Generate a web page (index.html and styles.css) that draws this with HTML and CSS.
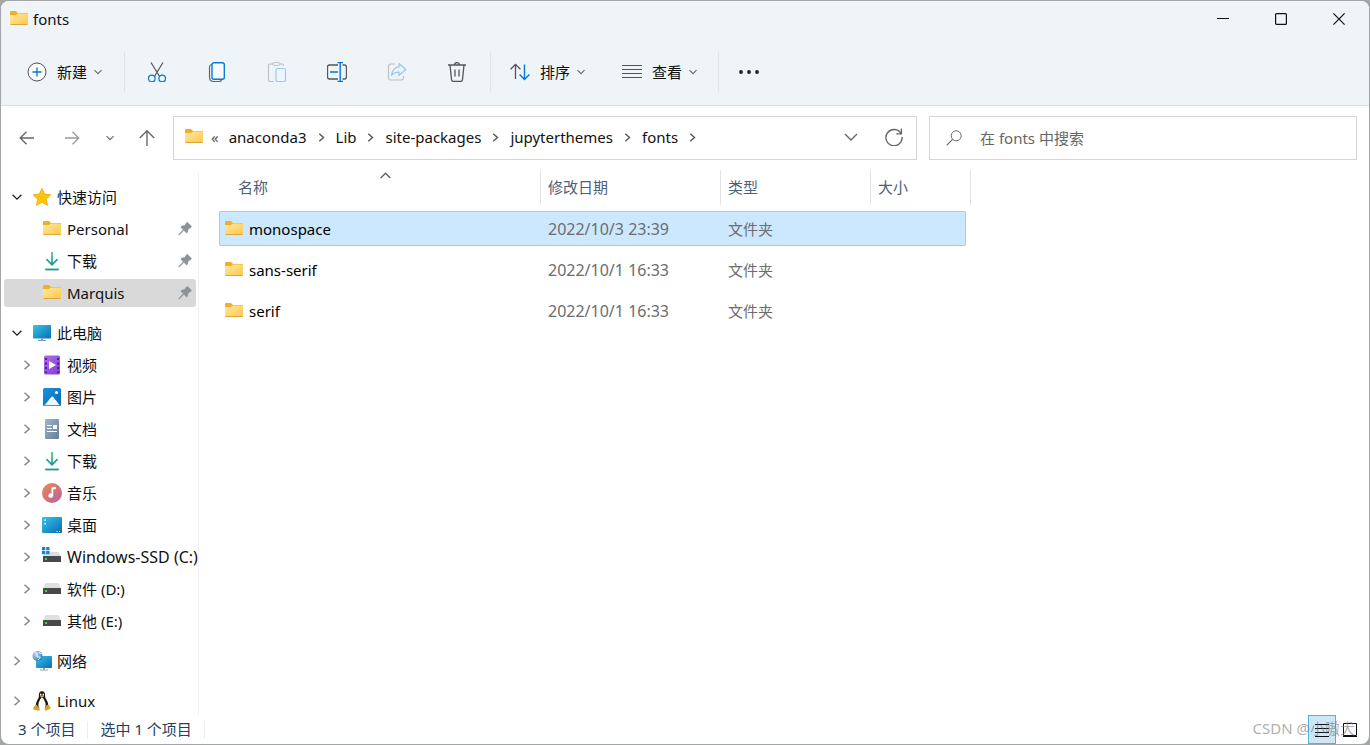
FILE: index.html
```html
<!DOCTYPE html>
<html lang="zh-CN">
<head>
<meta charset="utf-8">
<title>fonts</title>
<link rel="stylesheet" href="styles.css">
</head>
<body>
<svg class="sprite" aria-hidden="true">
  <defs>
    <linearGradient id="g-folder" x1="0" y1="0" x2="1" y2="1"><stop offset="0" stop-color="#ffe8a0"/><stop offset="1" stop-color="#fdc84a"/></linearGradient>
    <linearGradient id="g-screen" x1="0" y1="0" x2="1" y2="1"><stop offset="0" stop-color="#35c6e8"/><stop offset="1" stop-color="#0b6bb4"/></linearGradient>
    <linearGradient id="g-video" x1="0" y1="0" x2="1" y2="1"><stop offset="0" stop-color="#b06be8"/><stop offset="1" stop-color="#7f3fd6"/></linearGradient>
    <linearGradient id="g-doc" x1="0" y1="0" x2="1" y2="1"><stop offset="0" stop-color="#a3b5c8"/><stop offset="1" stop-color="#647d98"/></linearGradient>
    <linearGradient id="g-music" x1="0" y1="0" x2="1" y2="1"><stop offset="0" stop-color="#f08a4c"/><stop offset="1" stop-color="#b061a8"/></linearGradient>
    <linearGradient id="g-pic" x1="0" y1="0" x2="1" y2="1"><stop offset="0" stop-color="#1894dc"/><stop offset="1" stop-color="#0868b4"/></linearGradient>
    <linearGradient id="g-down" x1="0" y1="0" x2="0" y2="1" ><stop offset="0" stop-color="#35c08e"/><stop offset="1" stop-color="#12938f"/></linearGradient>
    <radialGradient id="g-globe" cx=".35" cy=".3" r=".8"><stop offset="0" stop-color="#b9e2f5"/><stop offset="1" stop-color="#2874a8"/></radialGradient>
  </defs>
  <symbol id="folder" viewBox="0 0 20 20"><path d="M1 3q0-1 1-1h5l2 2h9q1 0 1 1v5H1z" fill="#eeb02a"/><path d="M1 6h6l2-1.500h9q1 0 1 1V15q0 1-1 1H2q-1 0-1-1z" fill="url(#g-folder)"/><path d="M1.500 15.500h17" stroke="#dda63a"/></symbol>
  <symbol id="star" viewBox="0 0 20 20"><path d="M10 1.500l2.700 5.600 6.100.8-4.500 4.200 1.200 6.200L10 15.300l-5.500 3 1.200-6.200L1.200 7.900l6.100-.8z" fill="#fcc40c" stroke="#f3b70b" stroke-linejoin="round"/></symbol>
  <symbol id="download" viewBox="0 0 20 20"><path d="M9.200 1h1.600v10.800l4.200-4.200 1.200 1.200-6.200 6.200-6.200-6.200L5 7.600l4.200 4.200z" fill="url(#g-down)"/><path d="M3.200 17.600h13.600v1.800H3.200z" fill="#159a8d"/></symbol>
  <symbol id="pc" viewBox="0 0 20 20"><rect x="1" y="2" width="18" height="13.500" rx="1" fill="url(#g-screen)"/><path d="M9 15.500h2V17h3v1H6v-1h3z" fill="#8298a5"/></symbol>
  <symbol id="video" viewBox="0 0 20 20"><rect x="2" y="0.500" width="16" height="19" rx="1.500" fill="url(#g-video)"/><path d="M4 3v15M16 3v15" stroke="#36136c" stroke-width="1.600" stroke-dasharray="2 2.500"/><path d="M7 6l7 4-7 4z" fill="#fff"/></symbol>
  <symbol id="picture" viewBox="0 0 20 20"><rect x="1" y="1" width="18" height="18" rx="1.500" fill="url(#g-pic)"/><path d="M2.500 18.300l7-8.500q.8-.8 1.600 0l6.700 8.500z" fill="#edf8ff"/><circle cx="14.500" cy="5.500" r="1.600" fill="#fff"/></symbol>
  <symbol id="document" viewBox="0 0 20 20"><rect x="3" y="0" width="14" height="20" rx="1" fill="url(#g-doc)"/><path d="M5 6.500h5M5 9.500h5M5 12.500h10M11 9.500h4" stroke="#fff" stroke-width="1.200"/><path d="M11 6h4v3h-4z" fill="#fff"/></symbol>
  <symbol id="music" viewBox="0 0 20 20"><circle cx="10" cy="10" r="10" fill="url(#g-music)"/><path d="M9.500 4.500l4.500-.8v2.400l-2.800.5v6a2.400 2.200 0 1 1-1.700-2.100z" fill="#fff"/></symbol>
  <symbol id="desktop" viewBox="0 0 20 20"><rect x="0" y="2" width="20" height="16" rx="1" fill="url(#g-screen)"/><path d="M2.500 4.500h1.500v1.500H2.500zM2.500 8h1.500v1.500H2.500z" fill="#fff"/><path d="M14.500 16.500h1M17 16.500h1" stroke="#fff"/></symbol>
  <symbol id="drive" viewBox="0 0 20 20"><path d="M4.500 4h11q1 0 1.500 1l2 4.500H1L3 5q.500-1 1.500-1z" fill="#dedfe0"/><rect x="1" y="9" width="18" height="6" rx=".5" fill="#48494a"/><rect x="3" y="11" width="2" height="2" fill="#2fdc4b"/></symbol>
  <symbol id="windrive" viewBox="0 0 20 20"><path d="M5 5h11q.8 0 1.200 1l1.800 3.500H1L3 6z" fill="#dedfe0"/><rect x="1" y="9" width="18" height="6" rx=".5" fill="#48494a"/><rect x="3" y="11" width="2" height="2" fill="#2fdc4b"/><path d="M0 0h3.300v3.200H0zM4.200 0h3.300v3.200H4.200zM0 4h3.300v3.300H0zM4.200 4h3.300v3.300H4.200z" fill="#1783d2"/></symbol>
  <symbol id="network" viewBox="0 0 20 20"><rect x="4" y="5" width="16" height="12" rx="1" fill="url(#g-screen)"/><path d="M11 17h2v1.500h3v1H8v-1h3z" fill="#8fa7b3"/><circle cx="5.500" cy="5" r="5" fill="url(#g-globe)"/><path d="M3 1.500q3 0 2 2.500t2 2-1 3M7 .8q0 2 2.500 2" stroke="#dff3fb" fill="none"/></symbol>
  <symbol id="linux" viewBox="0 0 20 20"><path d="M10 .3c-2.400 0-3.300 1.700-3.100 4 .2 2.600-.8 3.300-1.900 5.500-1 2.100-1.800 4.500-.7 7.200h11.400c1.200-2.700.3-5.200-.7-7.200-1.100-2.100-2.100-2.900-1.900-5.500.2-2.300-.7-4-3.100-4z" fill="#171717"/><path d="M10 6.500c-1.700.6-2 2.500-3 4.300-1 2.100-1 4.700.6 6.700h4.800c1.600-2 1.600-4.600.6-6.700-1-1.800-1.300-3.700-3-4.300z" fill="#fff"/><ellipse cx="8.700" cy="3.700" rx=".8" ry="1.100" fill="#fff"/><ellipse cx="11.300" cy="3.700" rx=".8" ry="1.100" fill="#fff"/><path d="M8 5.300q2-1.400 4 0l-2 1.500z" fill="#f0b21a"/><path d="M4 13.800q1 0 3.700 4.200c.6 1.500-1.200 2-2.500 1.300l-3.600-.9q-.7-.4-.1-2 .1-1.400 1.500-1.500zM16 13.800q-1.300 0-2.600 1.700-1.200 2.500-.5 3.500 1 1 2.500 0l3-1.600q.7-.6-.5-1.800-.4-1.400-1.900-1.800z" fill="#d9a11b"/></symbol>
  <symbol id="pin" viewBox="0 0 14 14"><path d="M8.500.8Q9.300.2 10 .9l3.200 3.200q.6.800-.3 1.300l-2.700 1.700-.9 3.300q-.5.9-1.200.2L5.900 8.300 1.400 12.800H.8v-.6l4.600-4.500-2.300-2.200q-.6-.8.300-1.200l3.400-.9z" fill="#8d9298" stroke="#8d9298" stroke-width=".6"/></symbol>
  <symbol id="right" viewBox="0 0 10 10"><path d="M2.500.7L7.300 5 2.500 9.300" fill="none" stroke="currentColor" stroke-width="1.500"/></symbol>
  <symbol id="down" viewBox="0 0 10 10"><path d="M.6 2.700L5 7.100l4.400-4.400" fill="none" stroke="currentColor" stroke-width="1.300"/></symbol>
  <symbol id="expand" viewBox="0 0 14 14"><path d="M1 4l6 6 6-6" fill="none" stroke="currentColor" stroke-width="1.400"/></symbol>
  <symbol id="plus" viewBox="0 0 20 20"><circle cx="10" cy="10" r="9" fill="#fafcfe" stroke="#555"/><path d="M10 5.500v9M5.500 10h9" stroke="#0078d4" stroke-width="1.300"/></symbol>
  <symbol id="cut" viewBox="0 0 20 20"><path d="M4 .5l8.300 13.500M16 .5L7.700 14" stroke="#555" stroke-width="1.200"/><circle cx="4.800" cy="16.500" r="3.300" fill="none" stroke="#0a7ad0" stroke-width="1.300"/><circle cx="15.200" cy="16.500" r="3.300" fill="none" stroke="#0a7ad0" stroke-width="1.300"/></symbol>
  <symbol id="copy" viewBox="0 0 20 20"><path d="M4.800 2.300Q2.500 3 2.500 5v10q0 4.500 4.500 4.500h5q2 0 2.700-1.500" fill="none" stroke="#666" stroke-width="1.200"/><rect x="5" y=".7" width="12.300" height="16.600" rx="2" fill="#f7fbff" stroke="#0a7ad0" stroke-width="1.400"/></symbol>
  <symbol id="paste" viewBox="0 0 20 20"><path d="M6 2H3Q1.500 2 1.500 3.500v14Q1.500 19.500 3 19.500h4M13 2h2.500Q16.500 2 16.500 4" fill="none" stroke="#bfc2c5" stroke-width="1.200"/><rect x="5.500" y=".6" width="7.500" height="2.800" rx="1.400" fill="none" stroke="#bfc2c5"/><rect x="9" y="6.500" width="9.500" height="13" rx="1.500" fill="#edf6ff" stroke="#9dcbed" stroke-width="1.200"/></symbol>
  <symbol id="rename" viewBox="0 0 20 20"><path d="M11 3H2.500Q.5 3 .5 5v10q0 2 2 2H11M15.500 3h2q2 0 2 2v10q0 2-2 2h-2" fill="none" stroke="#555" stroke-width="1.300"/><path d="M10.500.6h5.500M10.500 19.400h5.500M13.200.6v18.800M3 10h8" stroke="#0078d4" stroke-width="1.400"/></symbol>
  <symbol id="share" viewBox="0 0 20 20"><path d="M8 2H4Q1.500 2 1.500 4.500v11Q1.500 18 4 18h10q2.500 0 2.500-2.500V14" fill="none" stroke="#bfc2c5" stroke-width="1.200"/><path d="M12 1.500L18.800 7.500 12 13.500v-3.300Q7 10 4.500 13.500 5.500 5.500 12 4.800z" fill="none" stroke="#94c8f0" stroke-width="1.200" stroke-linejoin="round"/></symbol>
  <symbol id="trash" viewBox="0 0 20 20"><path d="M1 3h18M7.500 3q0-2.400 2.500-2.400T12.500 3M3 3l1.500 14.500q.2 2 2 2h7q1.800 0 2-2L17 3M8 7.500v7M12 7.500v7" fill="none" stroke="#555" stroke-width="1.300"/></symbol>
  <symbol id="sort" viewBox="0 0 20 20"><path d="M5.500 17V2.500M.6 7.300l4.900-4.900 4.900 4.900" fill="none" stroke="#555" stroke-width="1.300"/><path d="M14.500 2.500V17M9.600 12.500l4.900 4.900 4.900-4.900" fill="none" stroke="#0078d4" stroke-width="1.400"/></symbol>
  <symbol id="lines" viewBox="0 0 20 20"><path d="M0 3.500h20M0 7.500h20M0 11.500h20M0 15.500h20" stroke="#555"/></symbol>
  <symbol id="dots" viewBox="0 0 20 20"><path d="M2 10h.01M10 10h.01M18 10h.01" stroke="#222" stroke-width="3.800" stroke-linecap="round"/></symbol>
  <symbol id="arrow" viewBox="0 0 16 16"><path d="M15 8H1.500M7.500 1.700L1.200 8l6.300 6.300" fill="none" stroke="currentColor" stroke-width="1.300"/></symbol>
  <symbol id="forward" viewBox="0 0 16 16"><path d="M1 8h13.500M8.500 1.700L14.800 8l-6.300 6.300" fill="none" stroke="currentColor" stroke-width="1.300"/></symbol>
  <symbol id="up" viewBox="0 0 16 16"><path d="M8 16V1M.8 8L8 .8 15.200 8" fill="none" stroke="currentColor" stroke-width="1.400"/></symbol>
  <symbol id="refresh" viewBox="0 0 16 16"><path d="M14.300 5A7.200 7.200 0 1 0 15.200 8M14.600.5v4.700H10" fill="none" stroke="currentColor" stroke-width="1.200"/></symbol>
  <symbol id="search" viewBox="0 0 16 16"><circle cx="10.200" cy="5.800" r="5" fill="none" stroke="currentColor"/><path d="M6.600 9.400L.6 15.400" stroke="currentColor" stroke-width="1.200"/></symbol>
  <symbol id="min" viewBox="0 0 12 12"><path d="M0 5.500h12" stroke="currentColor"/></symbol>
  <symbol id="max" viewBox="0 0 12 12"><rect x=".6" y=".6" width="10.800" height="10.800" rx="1" fill="none" stroke="currentColor" stroke-width="1.200"/></symbol>
  <symbol id="close" viewBox="0 0 12 12"><path d="M.4.400l11.200 11.200M11.600.4L.4 11.600" stroke="currentColor" stroke-width="1.200"/></symbol>
  <symbol id="details" viewBox="0 0 16 16"><path d="M1 2.500h14M1 6.500h14M1 10.500h14M1 14.500h14" stroke="#111"/></symbol>
  <symbol id="large" viewBox="0 0 16 16"><path d="M1.500 1.500h13v12h-13zM1 14.500h14" fill="none" stroke="#111"/></symbol>
</svg>

<div class="window">
  <header class="chrome">
    <div class="titlebar">
      <svg class="i20"><use href="#folder"/></svg>
      <h1 class="title">fonts</h1>
      <div class="controls">
        <button class="control" aria-label="最小化"><svg class="i12"><use href="#min"/></svg></button>
        <button class="control" aria-label="最大化"><svg class="i12"><use href="#max"/></svg></button>
        <button class="control" aria-label="关闭"><svg class="i12"><use href="#close"/></svg></button>
      </div>
    </div>
    <div class="toolbar">
      <button class="tool tool-new"><svg class="i20"><use href="#plus"/></svg>新建<svg class="caret"><use href="#down"/></svg></button>
      <div class="tools">
        <button class="tool" aria-label="剪切"><svg class="i20"><use href="#cut"/></svg></button>
        <button class="tool" aria-label="复制"><svg class="i20"><use href="#copy"/></svg></button>
        <button class="tool" aria-label="粘贴"><svg class="i20"><use href="#paste"/></svg></button>
        <button class="tool" aria-label="重命名"><svg class="i20"><use href="#rename"/></svg></button>
        <button class="tool" aria-label="共享"><svg class="i20"><use href="#share"/></svg></button>
        <button class="tool" aria-label="删除"><svg class="i20"><use href="#trash"/></svg></button>
      </div>
      <div class="arrange">
        <button class="tool"><svg class="i20"><use href="#sort"/></svg>排序<svg class="caret"><use href="#down"/></svg></button>
        <button class="tool"><svg class="i20"><use href="#lines"/></svg>查看<svg class="caret"><use href="#down"/></svg></button>
      </div>
      <button class="tool" aria-label="更多"><svg class="i20"><use href="#dots"/></svg></button>
    </div>
  </header>

  <div class="location">
    <div class="history">
      <button class="nav-button" aria-label="后退"><svg class="i16"><use href="#arrow"/></svg></button>
      <button class="nav-button faded" aria-label="前进"><svg class="i16"><use href="#forward"/></svg></button>
      <button class="nav-button nav-recent" aria-label="最近"><svg class="caret"><use href="#down"/></svg></button>
      <button class="nav-button" aria-label="向上"><svg class="i16"><use href="#up"/></svg></button>
    </div>
    <nav class="address" aria-label="路径">
      <svg class="i20"><use href="#folder"/></svg>
      <span class="overflow">«</span>
      <a href="#">anaconda3</a><svg class="crumb"><use href="#right"/></svg>
      <a href="#">Lib</a><svg class="crumb"><use href="#right"/></svg>
      <a href="#">site-packages</a><svg class="crumb"><use href="#right"/></svg>
      <a href="#">jupyterthemes</a><svg class="crumb"><use href="#right"/></svg>
      <a href="#">fonts</a><svg class="crumb"><use href="#right"/></svg>
      <div class="address-actions">
        <button class="nav-button" aria-label="展开"><svg class="i14"><use href="#expand"/></svg></button>
        <button class="nav-button" aria-label="刷新"><svg class="i18"><use href="#refresh"/></svg></button>
      </div>
    </nav>
    <label class="search"><svg class="i16"><use href="#search"/></svg><input type="search" placeholder="在 fonts 中搜索" aria-label="在 fonts 中搜索"></label>
  </div>

  <main class="main">
    <nav class="sidebar" aria-label="导航">
      <div class="group">
        <a class="item root" href="#"><svg class="fold open"><use href="#down"/></svg><svg class="i20"><use href="#star"/></svg>快速访问</a>
        <a class="item" href="#"><span class="fold"></span><svg class="i20"><use href="#folder"/></svg>Personal<svg class="pin"><use href="#pin"/></svg></a>
        <a class="item" href="#"><span class="fold"></span><svg class="i20"><use href="#download"/></svg>下载<svg class="pin"><use href="#pin"/></svg></a>
        <a class="item current" href="#"><span class="fold"></span><svg class="i20"><use href="#folder"/></svg>Marquis<svg class="pin"><use href="#pin"/></svg></a>
      </div>
      <div class="group">
        <a class="item root" href="#"><svg class="fold open"><use href="#down"/></svg><svg class="i20"><use href="#pc"/></svg>此电脑</a>
        <a class="item" href="#"><svg class="fold"><use href="#right"/></svg><svg class="i20"><use href="#video"/></svg>视频</a>
        <a class="item" href="#"><svg class="fold"><use href="#right"/></svg><svg class="i20"><use href="#picture"/></svg>图片</a>
        <a class="item" href="#"><svg class="fold"><use href="#right"/></svg><svg class="i20"><use href="#document"/></svg>文档</a>
        <a class="item" href="#"><svg class="fold"><use href="#right"/></svg><svg class="i20"><use href="#download"/></svg>下载</a>
        <a class="item" href="#"><svg class="fold"><use href="#right"/></svg><svg class="i20"><use href="#music"/></svg>音乐</a>
        <a class="item" href="#"><svg class="fold"><use href="#right"/></svg><svg class="i20"><use href="#desktop"/></svg>桌面</a>
        <a class="item large" href="#"><svg class="fold"><use href="#right"/></svg><svg class="i20"><use href="#windrive"/></svg>Windows-SSD (C:)</a>
        <a class="item" href="#"><svg class="fold"><use href="#right"/></svg><svg class="i20"><use href="#drive"/></svg>软件 (D:)</a>
        <a class="item" href="#"><svg class="fold"><use href="#right"/></svg><svg class="i20"><use href="#drive"/></svg>其他 (E:)</a>
      </div>
      <div class="group">
        <a class="item root" href="#"><svg class="fold"><use href="#right"/></svg><svg class="i20"><use href="#network"/></svg>网络</a>
      </div>
      <div class="group">
        <a class="item root" href="#"><svg class="fold"><use href="#right"/></svg><svg class="i20"><use href="#linux"/></svg>Linux</a>
      </div>
    </nav>

    <section class="content">
      <table class="files">
        <colgroup><col class="col-name"><col class="col-date"><col class="col-type"><col class="col-size"><col class="col-end"></colgroup>
        <thead>
          <tr><th class="name-head" scope="col">名称<svg class="sorted"><use href="#down"/></svg></th><th scope="col">修改日期</th><th scope="col">类型</th><th scope="col" colspan="2">大小</th></tr>
        </thead>
        <tbody>
          <tr class="selected"><td><span class="file"><svg class="i20"><use href="#folder"/></svg>monospace</span></td><td class="large">2022/10/3 23:39</td><td>文件夹</td><td></td></tr>
          <tr><td><span class="file"><svg class="i20"><use href="#folder"/></svg>sans-serif</span></td><td class="large">2022/10/1 16:33</td><td>文件夹</td><td></td></tr>
          <tr><td><span class="file"><svg class="i20"><use href="#folder"/></svg>serif</span></td><td class="large">2022/10/1 16:33</td><td>文件夹</td><td></td></tr>
        </tbody>
      </table>
    </section>
  </main>

  <footer class="status">
    <span class="count">3 个项目</span>
    <span class="count">选中 1 个项目</span>
    <div class="views">
      <button class="view active" aria-label="详细信息"><svg class="i16"><use href="#details"/></svg></button>
      <button class="view" aria-label="大图标"><svg class="i16"><use href="#large"/></svg></button>
    </div>
  </footer>
  <div class="watermark">CSDN @小嗷犬</div>
</div>
</body>
</html>
```

FILE: styles.css
```css
* { box-sizing: border-box; }
body {
  margin: 0;
  background: #a3a5a8;
  color: #111;
  font: 15px/20px "Noto Sans", "Noto Sans CJK SC", sans-serif;
}
button { padding: 0; border: 0; background: none; color: inherit; font: inherit; }
a { color: inherit; text-decoration: none; }
svg { flex: none; display: block; }

.sprite { position: absolute; width: 0; height: 0; }
.i12 { width: 12px; height: 12px; }
.i14 { width: 14px; height: 14px; }
.i16 { width: 16px; height: 16px; }
.i18 { width: 18px; height: 18px; }
.i20 { width: 20px; height: 20px; }
.large { font-size: 16px; }

.window {
  position: relative;
  display: flex;
  flex-direction: column;
  min-height: calc(100vh - 2px);
  margin: 1px;
  border-radius: 8px;
  background: #fff;
  overflow: hidden;
}

.chrome { background: #eff4f9; border-bottom: 1px solid #dcdfe1; }
.titlebar { display: flex; align-items: center; height: 36px; padding-left: 8px; }
.title { margin: 0 0 0 4px; font-size: 15px; font-weight: 400; }
.controls { display: flex; margin-left: auto; padding-right: 1px; }
.control { display: flex; align-items: center; justify-content: center; width: 58px; height: 36px; }
.toolbar { display: flex; align-items: center; height: 68px; padding-top: 1px; }
.tool { display: flex; align-items: center; gap: 10px; height: 40px; }
.caret { width: 8px; height: 8px; color: #666; }
.tool .caret { margin-left: -3px; }
.tool-new { padding: 0 22px 0 26px; }
.tools, .arrange { display: flex; align-items: center; height: 40px; border-left: 1px solid #e0e4e8; }
.tools { gap: 40px; padding: 0 23px 0 22px; }
.arrange { gap: 37px; padding: 0 21px 0 19px; border-right: 1px solid #e0e4e8; }
.arrange + .tool { padding-left: 20px; }

.location { display: grid; grid-template-columns: 160px minmax(0, 744fr) minmax(0, 428fr); column-gap: 12px; padding: 10px 12px 5px 0; }
.history { display: flex; align-items: center; justify-content: space-between; padding: 0 6px 0 18px; }
.nav-button { display: flex; align-items: center; justify-content: center; color: #666; }
.nav-recent { margin: 0 -4px; }
.faded { color: #999; }
.address, .search { display: flex; align-items: center; height: 44px; border: 1px solid #d5d5d5; }
.address { padding: 0 13px 2px 10px; }
.overflow { margin: 0 10px 0 7px; color: #555; }
.crumb { width: 9px; height: 9px; margin: 0 10px; color: #555; }
.address-actions { display: flex; gap: 27px; margin-left: auto; }
.search { padding: 0 16px; gap: 18px; color: #666; }
.search input { flex: 1; min-width: 0; padding: 0; border: 0; outline: 0; background: none; color: #666; font: inherit; }
.search input::placeholder { color: #666; opacity: 1; }

.main { display: flex; flex: 1; }
.sidebar { display: flex; flex-direction: column; gap: 12px; width: 198px; margin-top: 7px; padding: 11px 2px 0 3px; border-right: 1px solid #f0f0f0; }
.group { display: flex; flex-direction: column; gap: 4px; }
.item { display: flex; align-items: center; height: 28px; padding: 0 4px 0 18px; border-radius: 3px; white-space: nowrap; }
.item .i20 { margin-right: 5px; }
.root { padding-left: 8px; }
.fold { width: 10px; height: 10px; margin-right: 10px; color: #888; }
.open { color: #222; }
.current { background: #d9d9d9; }
.pin { width: 14px; height: 14px; margin-left: auto; }

.content { flex: 1; padding: 5px 0 0 20px; }
.files { table-layout: fixed; width: 752px; border-collapse: separate; border-spacing: 0; }
.col-name { width: 322px; }
.col-date { width: 180px; }
.col-type { width: 150px; }
.col-size { width: 95px; }
.col-end { width: 5px; }
.files th { height: 35px; padding: 0 7px 2px; border-right: 1px solid #e3e3e3; color: #4c607a; font-weight: 400; text-align: left; }
.files .name-head { position: relative; padding-left: 19px; }
.sorted { position: absolute; top: 0; left: 161px; width: 11px; height: 11px; color: #666; transform: rotate(180deg); }
.files tbody::before { content: ""; display: block; height: 6px; }
.files td { height: 41px; padding: 0 7px 6px; color: #6d6d6d; }
.files td:first-child { padding-left: 5px; color: #000; }
.file { display: flex; align-items: center; gap: 5px; }
.files .selected td { height: 35px; padding-bottom: 0; background: #cce8ff; border: solid #99cef5; border-width: 1px 0; }
.files .selected td:first-child { padding-left: 4px; border-left-width: 1px; border-radius: 2px 0 0 2px; }
.files .selected td:last-child { border-right-width: 1px; border-radius: 0 2px 2px 0; }
.files .selected + tr td { height: 47px; padding-top: 6px; }

.status { display: flex; align-items: center; height: 29px; color: #24405f; }
.count { padding: 0 12px 2px; border-right: 1px solid #ededed; line-height: 16px; }
.count:first-child { padding-left: 17px; }
.views { display: flex; align-self: stretch; margin-left: auto; padding-right: 5px; }
.view { display: flex; align-items: center; justify-content: center; width: 28px; }
.active { border: 1px solid #4fb4de; background: #cce8f7; }
.watermark { position: absolute; right: 14px; bottom: 6px; color: #77777799; pointer-events: none; }
```
